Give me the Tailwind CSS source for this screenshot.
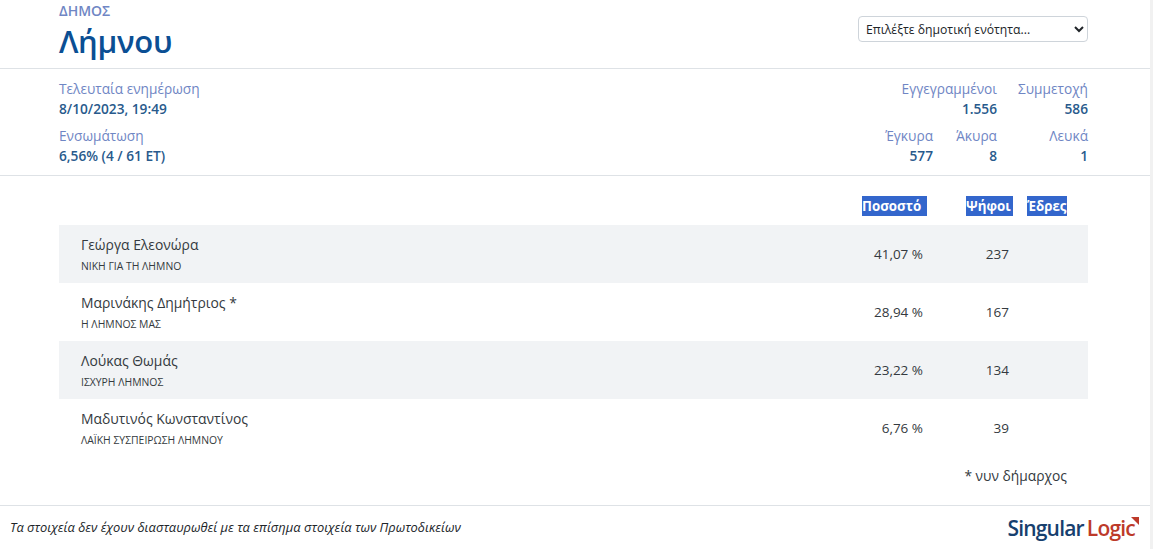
<!DOCTYPE html>
<html lang="el">
  <head>
    <meta charset="UTF-8" />
    <meta name="viewport" content="width=device-width, initial-scale=1.0" />
    <title>Δήμος Λήμνου</title>
    <script src="https://cdn.jsdelivr.net/npm/@tailwindcss/browser@4"></script>
  </head>
  <body class="bg-white h-[549px] overflow-hidden font-['Open_Sans','Noto_Sans',sans-serif] flex">
    <div class="w-[1150px] h-full flex flex-col">
      <!-- header -->
      <div class="h-[69px] border-b border-[#dee2e6] pl-[59px] pr-[62px] flex justify-between">
        <div>
          <div class="text-[14px] leading-[20px] font-semibold text-[#6f86c4] mt-px">ΔΗΜΟΣ</div>
          <div class="text-[31px] leading-[40px] font-semibold text-[#0b4f94] tracking-[-0.3px]">Λήμνου</div>
        </div>
        <select class="mt-4 w-[230px] h-[26px] pl-[3px] text-[12.2px] text-[#212529] bg-white border border-[#ced4da] rounded">
          <option>Επιλέξτε δημοτική ενότητα...</option>
        </select>
      </div>

      <!-- stats -->
      <div class="h-[107px] border-b border-[#dee2e6] pl-[59px] pr-[62px] pt-[10px] flex justify-between">
        <div class="flex flex-col gap-[7px] text-[13.7px] leading-[20px]">
          <div>
            <div class="text-[#6f86c4]">Τελευταία ενημέρωση</div>
            <div class="font-semibold text-[#285a8c]">8/10/2023, 19:49</div>
          </div>
          <div>
            <div class="text-[#6f86c4]">Ενσωμάτωση</div>
            <div class="font-semibold text-[#285a8c]">6,56% (4 / 61 ΕΤ)</div>
          </div>
        </div>
        <div class="grid grid-cols-[75px_64px_91px] content-start gap-y-[7px] text-right text-[13.7px] leading-[20px]">
          <div class="col-span-2">
            <div class="text-[#6f86c4]">Εγγεγραμμένοι</div>
            <div class="font-semibold text-[#285a8c]">1.556</div>
          </div>
          <div>
            <div class="text-[#6f86c4]">Συμμετοχή</div>
            <div class="font-semibold text-[#285a8c]">586</div>
          </div>
          <div>
            <div class="text-[#6f86c4]">Έγκυρα</div>
            <div class="font-semibold text-[#285a8c]">577</div>
          </div>
          <div>
            <div class="text-[#6f86c4]">Άκυρα</div>
            <div class="font-semibold text-[#285a8c]">8</div>
          </div>
          <div>
            <div class="text-[#6f86c4]">Λευκά</div>
            <div class="font-semibold text-[#285a8c]">1</div>
          </div>
        </div>
      </div>

      <!-- results -->
      <div class="flex-1 pl-[59px] pr-[62px] pt-5">
        <div class="flex h-[20px] mb-[9px] text-[13.3px] leading-[21px] font-bold text-white">
          <div class="w-[803px]"></div>
          <div class="w-[65px] bg-[#3366cc]">Ποσοστό</div>
          <div class="w-[39px]"></div>
          <div class="w-[47px] bg-[#3366cc]">Ψήφοι</div>
          <div class="w-[14px]"></div>
          <div class="w-[40px] bg-[#3366cc] overflow-hidden whitespace-nowrap">Έδρες</div>
        </div>

        <div class="flex items-center h-[58px] bg-[#f1f3f5] pl-[22px]">
          <div class="w-[781px]">
            <div class="text-[13.9px] leading-[20px] text-[#343a40]">Γεώργα Ελεονώρα</div>
            <div class="text-[10.4px] leading-[14px] mt-[4px] text-[#343a40]">ΝΙΚΗ ΓΙΑ ΤΗ ΛΗΜΝΟ</div>
          </div>
          <div class="w-[61px] text-right text-[13.5px] text-[#343a40]">41,07 %</div>
          <div class="w-[86px] text-right text-[13.5px] text-[#343a40]">237</div>
        </div>
        <div class="flex items-center h-[58px] pl-[22px]">
          <div class="w-[781px]">
            <div class="text-[13.9px] leading-[20px] text-[#343a40]">Μαρινάκης Δημήτριος *</div>
            <div class="text-[10.4px] leading-[14px] mt-[4px] text-[#343a40]">Η ΛΗΜΝΟΣ ΜΑΣ</div>
          </div>
          <div class="w-[61px] text-right text-[13.5px] text-[#343a40]">28,94 %</div>
          <div class="w-[86px] text-right text-[13.5px] text-[#343a40]">167</div>
        </div>
        <div class="flex items-center h-[58px] bg-[#f1f3f5] pl-[22px]">
          <div class="w-[781px]">
            <div class="text-[13.9px] leading-[20px] text-[#343a40]">Λούκας Θωμάς</div>
            <div class="text-[10.4px] leading-[14px] mt-[4px] text-[#343a40]">ΙΣΧΥΡΗ ΛΗΜΝΟΣ</div>
          </div>
          <div class="w-[61px] text-right text-[13.5px] text-[#343a40]">23,22 %</div>
          <div class="w-[86px] text-right text-[13.5px] text-[#343a40]">134</div>
        </div>
        <div class="flex items-center h-[58px] pl-[22px]">
          <div class="w-[781px]">
            <div class="text-[13.9px] leading-[20px] text-[#343a40]">Μαδυτινός Κωνσταντίνος</div>
            <div class="text-[10.4px] leading-[14px] mt-[4px] text-[#343a40]">ΛΑΪΚΗ ΣΥΣΠΕΙΡΩΣΗ ΛΗΜΝΟΥ</div>
          </div>
          <div class="w-[61px] text-right text-[13.5px] text-[#343a40]">6,76 %</div>
          <div class="w-[86px] text-right text-[13.5px] text-[#343a40]">39</div>
        </div>

        <div class="mt-[9px] pr-[21px] text-right text-[13.8px] leading-[20px] text-[#343a40]">* νυν δήμαρχος</div>
      </div>

      <!-- footer -->
      <div class="h-[44px] border-t border-[#dee2e6] pl-[10px] pr-[11px] flex justify-between items-center">
        <div class="text-[12.9px] italic text-[#212529]">Τα στοιχεία δεν έχουν διασταυρωθεί με τα επίσημα στοιχεία των Πρωτοδικείων</div>
        <div class="relative flex items-baseline text-[21px] font-semibold leading-[24px] tracking-[-0.8px]">
          <span class="text-[#17406e]">Singular</span>
          <span class="text-[#bd3a2a] ml-[3px] pr-[4px]">Logic</span>
          <svg class="absolute right-0 top-[1px] w-[8px] h-[8px]" viewBox="0 0 8 8"><polygon points="0,0 8,0 8,8" fill="#bd3a2a" /></svg>
        </div>
      </div>
    </div>
    <div class="w-[3px] h-full bg-[#f1f1f1]"></div>
  </body>
</html>
